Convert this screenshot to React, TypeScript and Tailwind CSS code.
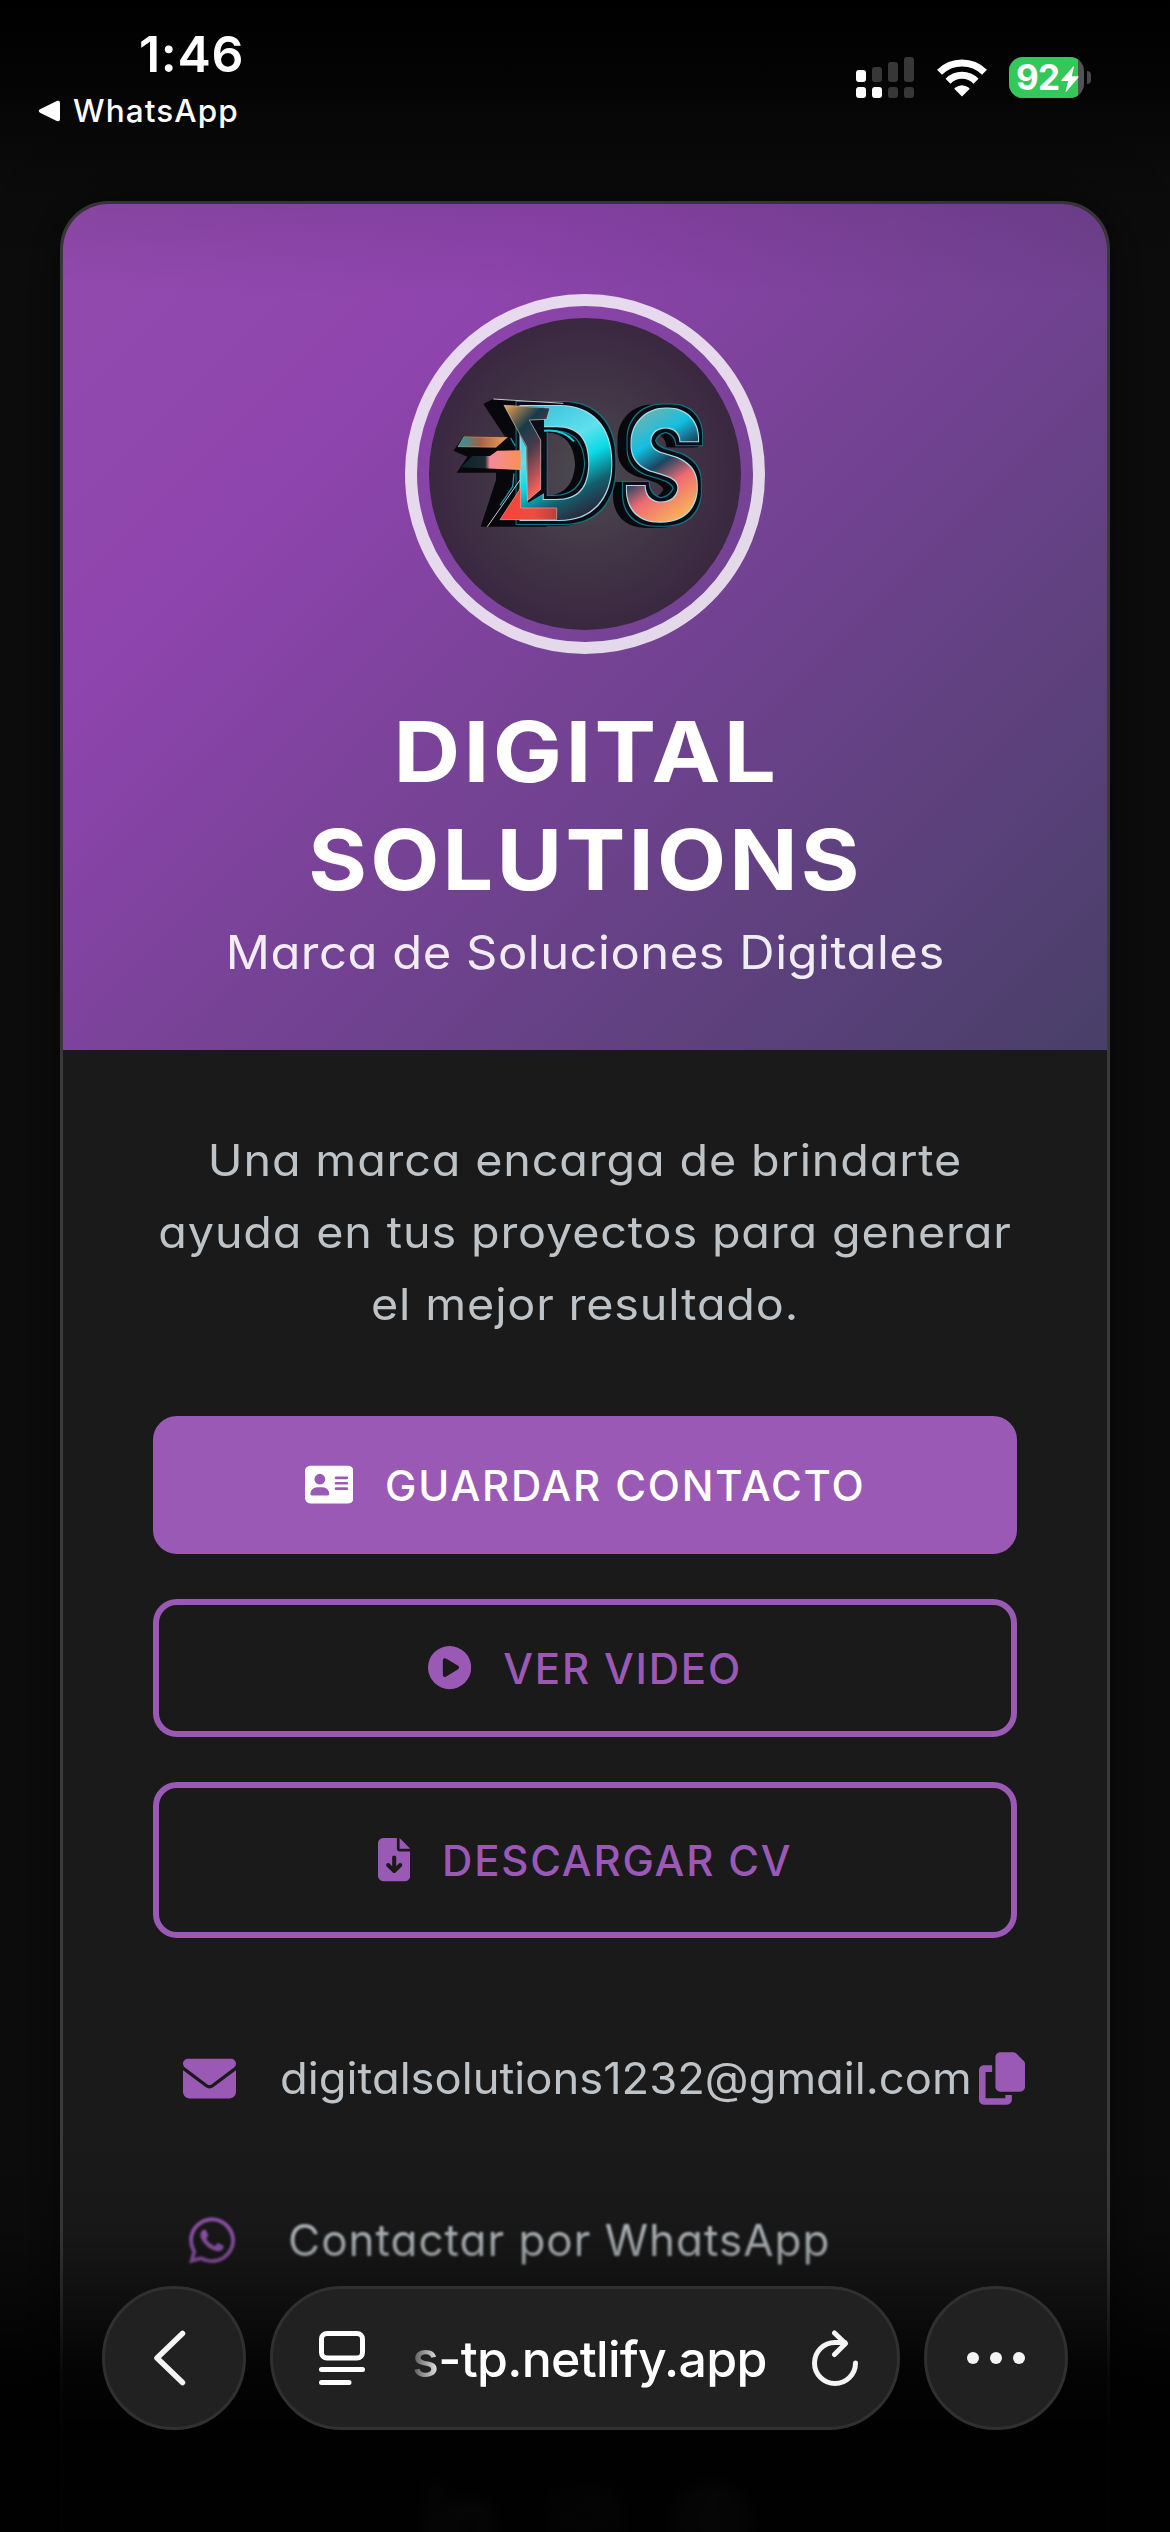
import type { ReactNode } from "react";
import {
  FaAddressCard,
  FaCirclePlay,
  FaCopy,
  FaEnvelope,
  FaFileArrowDown,
  FaGlobe,
  FaInstagram,
  FaLinkedinIn,
  FaWhatsapp,
} from "react-icons/fa6";

function StatusBar() {
  return (
    <div className="absolute inset-x-0 top-0 z-20 flex h-[150px] justify-between text-white">
      <div className="flex flex-col pl-[38px] pt-[24px]">
        <span className="pl-[101px] text-[50px] font-semibold leading-[60px] tracking-[0.7px]">1:46</span>
        <span className="mt-[7px] flex items-center gap-[12px] text-[31.5px] font-medium leading-[40px] tracking-[1.1px]">
          <svg width="23" height="22" viewBox="0 0 23 22" fill="#fff">
            <path d="M2 9.300 19.300.8Q22 0 22 3v16q0 3-2.700 2.200L2 12.700Q-.5 11 2 9.300Z" />
          </svg>
          WhatsApp
        </span>
      </div>
      <div className="flex items-start pr-[79px] pt-[57px]">
        <svg width="58" height="41" viewBox="0 0 58 41">
          <g fill="#fff">
            <rect x="0" y="13" width="10" height="12" rx="3" />
            <rect x="0" y="30" width="10" height="11" rx="3" />
            <rect x="16" y="30" width="10" height="11" rx="3" />
          </g>
          <g fill="#373737">
            <rect x="16" y="10" width="10" height="15" rx="3" />
            <rect x="32" y="5" width="10" height="20" rx="3" />
            <rect x="48" y="0" width="10" height="25" rx="3" />
            <rect x="32" y="30" width="10" height="11" rx="3" />
            <rect x="48" y="30" width="10" height="11" rx="3" />
          </g>
        </svg>
        <svg className="ml-[22px] mt-[1px]" width="52" height="39" viewBox="0 0 52 39">
          <g fill="none" stroke="#fff" strokeWidth="7">
            <path d="M3.500 14.200A32 32 0 0 1 48.500 14.200" />
            <path d="M12 23.200A19.500 19.500 0 0 1 40 23.200" />
          </g>
          <path d="M26 38.500 18.500 31Q18.300 30.300 19 29.800 26 24.600 33 29.800 33.700 30.300 33.500 31Z" fill="#fff" />
        </svg>
        <div className="relative ml-[21px] flex h-[41px] w-[75px] items-center overflow-hidden rounded-[14px] bg-[#525254]">
          <div className="absolute inset-y-0 left-0 w-[69px] bg-[#34c759]" />
          <span className="relative pl-[7px] text-[35px] font-bold leading-[41px] tracking-[-0.8px]">92</span>
          <svg className="absolute left-[52px] top-[9px]" width="18" height="26" viewBox="0 0 18 26" fill="#fff">
            <path d="M12.500.3Q13.300 0 13 1l-2.300 9.300h6.300q1.300 0 .4 1.200L5.500 25.400q-1 .9-.8-.3L7.200 15H1Q-.2 15 .7 13.800Z" />
          </svg>
        </div>
        <div className="ml-[3px] mt-[14px] h-[13px] w-[4px] rounded-r-full bg-[#48484a]" />
      </div>
    </div>
  );
}

function Logo() {
  return (
    <svg className="h-[312px] w-[312px]" viewBox="117 114 936 936" fontFamily="Inter, sans-serif" fontWeight="700">
      <defs>
        <radialGradient id="disc">
          <stop offset="0" stopColor="#4b4a4f" />
          <stop offset="0.5" stopColor="#433747" />
          <stop offset="1" stopColor="#3a2740" />
        </radialGradient>
        <linearGradient id="dFill" x1="0.25" y1="0" x2="0.55" y2="1">
          <stop offset="0" stopColor="#11566a" />
          <stop offset="0.2" stopColor="#3fc4dd" />
          <stop offset="0.42" stopColor="#5fe0ee" />
          <stop offset="0.55" stopColor="#08dbe6" />
          <stop offset="0.7" stopColor="#14606f" />
          <stop offset="0.84" stopColor="#2c2338" />
          <stop offset="1" stopColor="#b84040" />
        </linearGradient>
        <linearGradient id="sFill" x1="0.3" y1="0" x2="0.6" y2="1">
          <stop offset="0" stopColor="#1796ad" />
          <stop offset="0.2" stopColor="#5fb5ba" />
          <stop offset="0.36" stopColor="#12bfe0" />
          <stop offset="0.5" stopColor="#1b4660" />
          <stop offset="0.64" stopColor="#ee6a72" />
          <stop offset="0.84" stopColor="#f9b05c" />
          <stop offset="1" stopColor="#f4705a" />
        </linearGradient>
        <linearGradient id="blade" x1="0" y1="0" x2="0.5" y2="1">
          <stop offset="0" stopColor="#f8a552" />
          <stop offset="0.35" stopColor="#173b4b" />
          <stop offset="0.6" stopColor="#4b3a4c" />
          <stop offset="1" stopColor="#f4635a" />
        </linearGradient>
        <linearGradient id="stripeTop">
          <stop offset="0" stopColor="#1d9bab" />
          <stop offset="0.45" stopColor="#a5604a" />
          <stop offset="1" stopColor="#f2a15a" />
        </linearGradient>
        <linearGradient id="stripeLow">
          <stop offset="0" stopColor="#10232a" />
          <stop offset="0.4" stopColor="#1c2c31" />
          <stop offset="0.48" stopColor="#f28a9c" />
          <stop offset="1" stopColor="#fb8f55" />
        </linearGradient>
        <linearGradient id="foot">
          <stop offset="0" stopColor="#f5423b" />
          <stop offset="0.6" stopColor="#ef4d3f" />
          <stop offset="1" stopColor="#b84040" />
        </linearGradient>
        <filter id="bevel" filterUnits="userSpaceOnUse" x="117" y="300" width="936" height="500" colorInterpolationFilters="sRGB">
          <feMorphology in="SourceAlpha" operator="dilate" radius="15" result="wide" />
          <feMorphology in="SourceAlpha" operator="dilate" radius="13" result="mid" />
          <feMorphology in="SourceAlpha" operator="dilate" radius="2" result="thin" />
          <feOffset in="wide" dx="-14" dy="2" result="ext1" />
          <feOffset in="wide" dx="-28" dy="3" result="ext2" />
          <feFlood floodColor="#07080c" result="black" />
          <feComposite in="black" in2="ext1" operator="in" result="e1" />
          <feComposite in="black" in2="ext2" operator="in" result="e2" />
          <feFlood floodColor="#137482" />
          <feComposite in2="wide" operator="in" result="rim" />
          <feFlood floodColor="#0a0d16" />
          <feComposite in2="mid" operator="in" result="body" />
          <feFlood floodColor="#a9dbe0" />
          <feComposite in2="thin" operator="in" result="edge" />
          <feMerge>
            <feMergeNode in="e2" />
            <feMergeNode in="e1" />
            <feMergeNode in="rim" />
            <feMergeNode in="body" />
            <feMergeNode in="edge" />
            <feMergeNode in="SourceGraphic" />
          </feMerge>
        </filter>
      </defs>
      <circle cx="585" cy="582" r="468" fill="url(#disc)" />

      <path d="M280 372 310 356 470 364 470 740 272 740 318 600 318 578 200 578 232 530 190 512 222 468 345 470Z" fill="#08080c" />
      <g filter="url(#bevel)">
        <text transform="translate(362 720) scale(0.95 1)" fontSize="470" fill="url(#dFill)">D</text>
        <text transform="translate(690 720) skewX(-3) scale(0.81 1)" fontSize="454" fill="url(#sFill)">S</text>
      </g>

      <path d="M310 357 520 370 M292 740 390 600" stroke="#c9c9d2" strokeWidth="3" fill="none" />
      <path d="M342 376 462 382 462 640 414 668 408 500Z" fill="#0b0d14" />
      <path d="M342 376 480 384 470 418 418 420 452 480 452 628 412 662 410 500Z" fill="url(#blade)" stroke="#d9c9c0" strokeWidth="2" />
      <path d="M392 624 392 684 500 684 500 719 330 719Z" fill="url(#foot)" stroke="#f7a08a" strokeWidth="2" />
      <path d="M222 470 352 472 318 502 204 500Z" fill="url(#stripeTop)" stroke="#f0b070" strokeWidth="1.500" />
      <path d="M246 528 300 528 322 512 392 511 392 570 214 562Z" fill="url(#stripeLow)" />
      <path d="M462 452Q520 446 552 484" stroke="#17cfdf" strokeWidth="6" fill="none" />
      <path d="M372 580 368 620 330 676M362 474 376 498" stroke="#139aaa" strokeWidth="4" fill="none" />
    </svg>
  );
}

function ActionButton({ icon, label, variant }: { icon: ReactNode; label: string; variant: "solid" | "outline" | "tall" }) {
  const look = {
    solid: "h-[138px] bg-[#9b59b6] text-white",
    outline: "h-[138px] text-[#9b59b6]",
    tall: "h-[156px] text-[#9b59b6]",
  }[variant];
  return (
    <button
      className={`flex w-full items-center justify-center gap-[32px] rounded-[24px] border-[6px] border-[#9b59b6] text-[42px] font-medium tracking-[1.8px] ${look}`}
    >
      {icon}
      {label}
    </button>
  );
}

function BottomBar() {
  return (
    <div className="absolute inset-x-[102px] top-[2286px] z-20 flex gap-[24px]">
      <div className="flex h-[144px] w-[144px] shrink-0 items-center justify-center rounded-full border-[3px] border-[#303030] bg-[#212121]">
        <svg className="mr-[9px]" width="34" height="56" viewBox="0 0 34 56" fill="none" stroke="#f4f4f4" strokeWidth="5.500" strokeLinecap="round" strokeLinejoin="round">
          <path d="M29.500 3.500 4 28 29.500 52.500" />
        </svg>
      </div>
      <div className="flex h-[144px] w-[630px] items-center rounded-full border-[3px] border-[#303030] bg-[#212121] pl-[46px] pr-[38px]">
        <svg className="shrink-0" width="46" height="55" viewBox="0 0 46 55" fill="none" stroke="#fff" strokeWidth="5" strokeLinecap="round">
          <rect x="2.500" y="2.500" width="41" height="24.500" rx="5.500" />
          <path d="M2.500 38.500H43.500M2.500 51.500H30" />
        </svg>
        <span className="ml-[47px] mt-[2px] whitespace-nowrap text-[50px] font-medium leading-[60px] tracking-[-0.7px] text-white">
          <span className="bg-gradient-to-r from-[#555] to-[#e8e8e8] bg-clip-text text-transparent">s</span>-tp.netlify.app
        </span>
        <svg className="ml-auto shrink-0" width="48" height="56" viewBox="0 0 48 56" fill="none" stroke="#f4f4f4" strokeWidth="5" strokeLinecap="round" strokeLinejoin="round">
          <path d="M44.500 33A20.500 20.500 0 1 1 24 12.500H34M23.500 3 34.500 13.500 23.500 24.500" />
        </svg>
      </div>
      <div className="flex h-[144px] w-[144px] shrink-0 items-center justify-center gap-[11px] rounded-full border-[3px] border-[#303030] bg-[#212121]">
        <span className="h-[12px] w-[12px] rounded-full bg-[#f4f4f4]" />
        <span className="h-[12px] w-[12px] rounded-full bg-[#f4f4f4]" />
        <span className="h-[12px] w-[12px] rounded-full bg-[#f4f4f4]" />
      </div>
    </div>
  );
}

export default function App() {
  return (
    <div className="relative h-[2532px] w-[1170px] overflow-hidden bg-[#0d0d0d] font-['Inter',sans-serif]">
      <StatusBar />

      <main className="px-[60px] pt-[201px]">
        <div className="h-[2500px] overflow-hidden rounded-[48px] border-[3px] border-[#3a3a3a] bg-[#1a1a1a] shadow-[0_0_60px_rgba(0,0,0,0.6)]">
          <header className="flex h-[846px] flex-col items-center bg-[linear-gradient(135deg,#934bae_0%,#8e44ad_27%,#483f68_100%)] pt-[90px]">
            <div className="flex h-[360px] w-[360px] items-center justify-center rounded-full border-[12px] border-white/80">
              <Logo />
            </div>
            <h1 className="mt-[44px] flex flex-col items-center pl-[2px] text-[84px] font-bold leading-[108px] tracking-[3px] text-white">
              <span className="scale-x-[1.1]">DIGITAL</span>
              <span className="scale-x-[1.068]">SOLUTIONS</span>
            </h1>
            <p className="mt-[2px] scale-x-[1.063] whitespace-nowrap text-[46px] leading-[72px] tracking-[0.5px] text-white/90 [font-feature-settings:'cv11']">
              Marca de Soluciones Digitales
            </p>
          </header>

          <section className="px-[90px] pt-[74px]">
            <p className="scale-x-[1.062] whitespace-nowrap text-center text-[44px] leading-[72px] tracking-[0.8px] text-[#bdc3c7] [font-feature-settings:'cv11']">
              Una marca encarga de brindarte
              <br />
              ayuda en tus proyectos para generar
              <br />
              el mejor resultado.
            </p>

            <div className="mt-[76px] flex flex-col gap-[45px]">
              <ActionButton
                variant="solid"
                icon={<FaAddressCard className="h-[43.2px] w-[48.6px]" />}
                label="GUARDAR CONTACTO"
              />
              <ActionButton variant="outline" icon={<FaCirclePlay className="h-[43.2px] w-[43.2px]" />} label="VER VIDEO" />
              <ActionButton variant="tall" icon={<FaFileArrowDown className="h-[43.2px] w-[32.4px]" />} label="DESCARGAR CV" />
            </div>

            <ul className="mt-[59px] text-[44px] text-[#bdc3c7] [font-feature-settings:'cv11']">
              <li className="flex h-[162px] items-center pl-[30px]">
                <FaEnvelope className="h-[53px] w-[53px] shrink-0 text-[#9b59b6]" />
                <span className="ml-[44px] w-[699px] shrink-0 whitespace-nowrap">
                  <span className="inline-block origin-left scale-x-[1.03]">digitalsolutions1232@gmail.com</span>
                </span>
                <FaCopy className="h-[53px] w-[46px] shrink-0 text-[#9b59b6]" />
              </li>
              <li className="flex h-[162px] items-center pl-[36px] blur-[1px]">
                <FaWhatsapp className="h-[53px] w-[46px] shrink-0 text-[#9b59b6]" />
                <span className="ml-[53px] whitespace-nowrap tracking-[1px]">Contactar por WhatsApp</span>
              </li>
            </ul>

            <div className="mt-[162px] flex justify-center gap-[54px] text-[72px] text-[#c8ccd0] blur-[8px]">
              <FaLinkedinIn />
              <FaInstagram />
              <FaGlobe />
            </div>
          </section>
        </div>
      </main>

      <div className="pointer-events-none absolute inset-x-0 top-0 z-10 h-[330px] bg-[linear-gradient(to_bottom,rgba(0,0,0,1)_0%,rgba(0,0,0,0.7)_25%,rgba(0,0,0,0.09)_60%,rgba(0,0,0,0)_90%)]" />
      <div className="pointer-events-none absolute inset-x-0 bottom-0 z-10 h-[400px] bg-[linear-gradient(to_bottom,rgba(0,0,0,0)_0%,rgba(0,0,0,0.11)_25%,rgba(0,0,0,0.4)_40%,rgba(0,0,0,0.85)_60%,rgba(0,0,0,0.97)_75%,rgba(0,0,0,0.96)_100%)]" />

      <BottomBar />
    </div>
  );
}
